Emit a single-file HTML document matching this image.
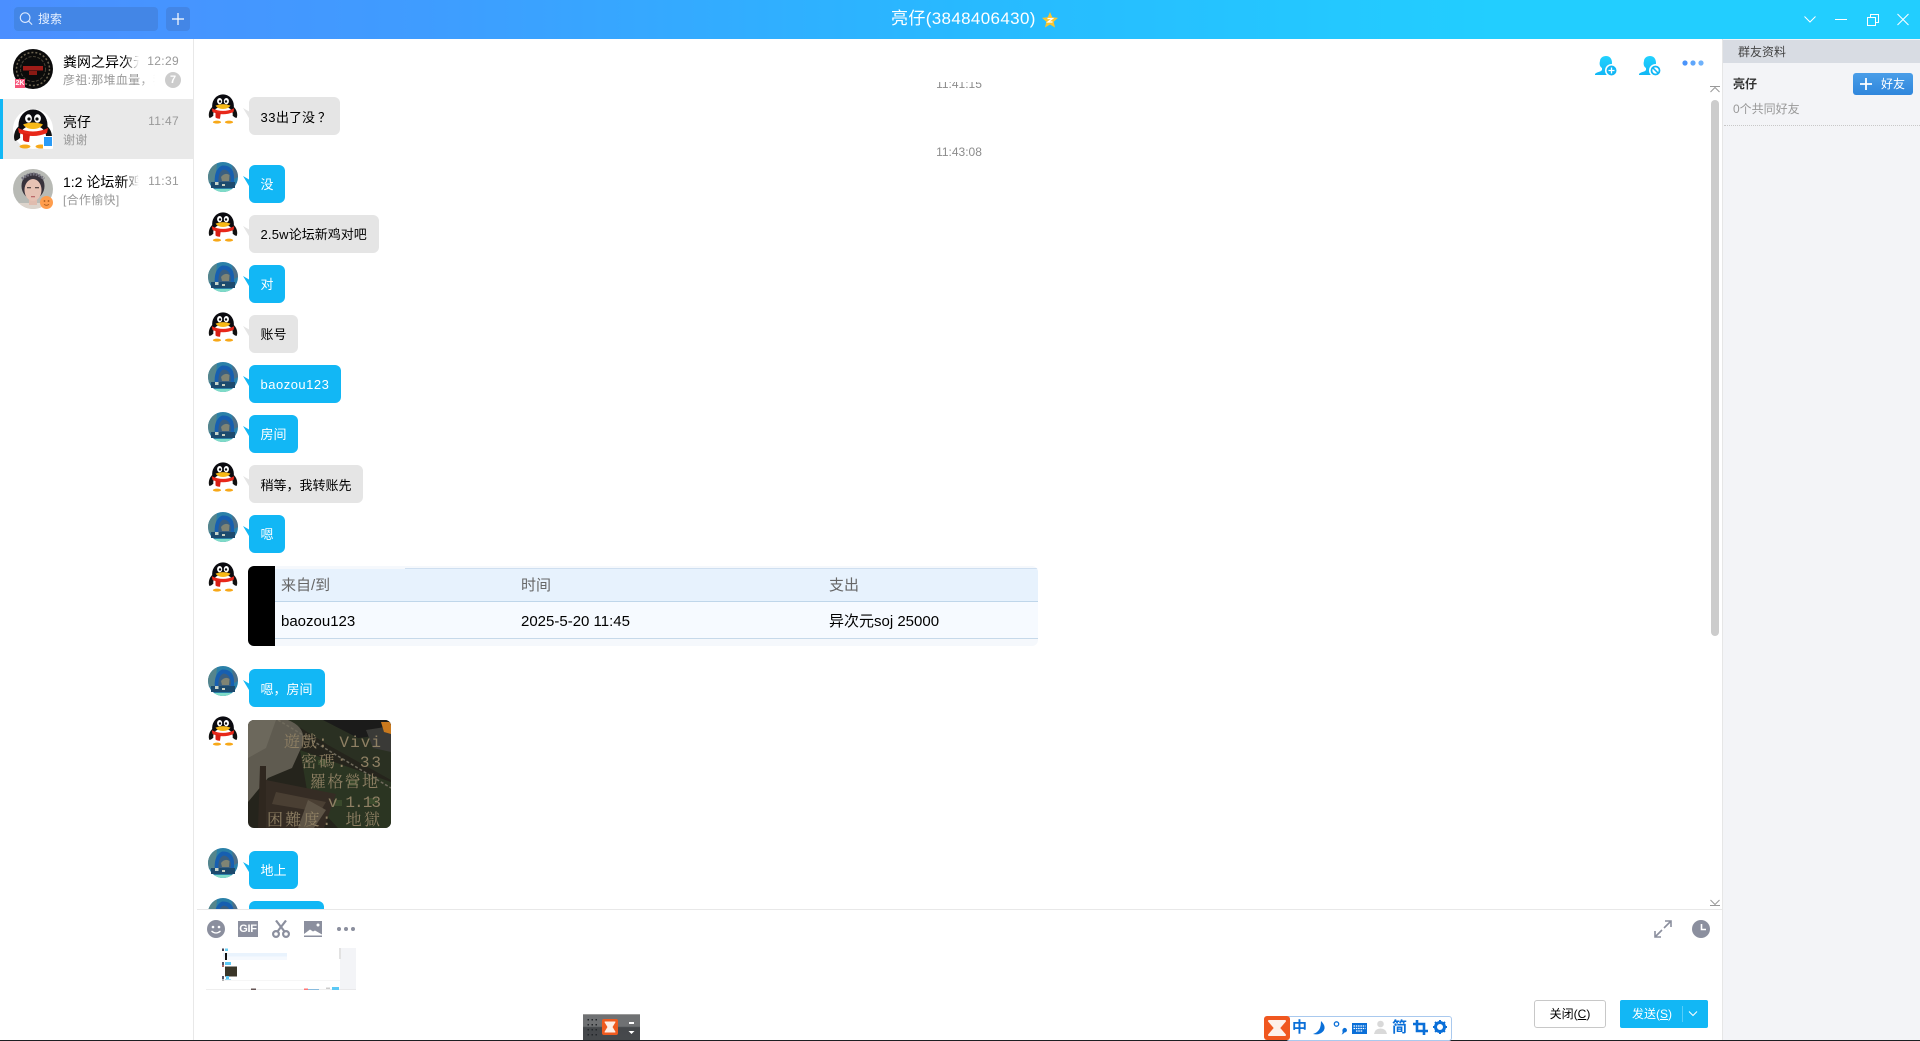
<!DOCTYPE html>
<html lang="zh">
<head>
<meta charset="utf-8">
<title>亮仔</title>
<style>
*{box-sizing:border-box;margin:0;padding:0}
html,body{width:1920px;height:1041px;overflow:hidden;background:#fff}
body{position:relative;font-family:"Liberation Sans","Noto Sans CJK SC",sans-serif;font-size:14px;color:#000}
.a{position:absolute}
.t{position:absolute;white-space:nowrap}
.pc{font-family:"Noto Sans CJK TC",sans-serif}
#bar{left:0;top:0;width:1920px;height:39px;background:linear-gradient(90deg,#4b8fff 0%,#3f9cff 22%,#28b9ff 50%,#22ceff 78%,#22ceff 100%)}
.item .name{position:absolute;left:63px;top:0;width:76px;height:20px;line-height:20px;font-size:14px;overflow:hidden;white-space:nowrap;-webkit-mask-image:linear-gradient(90deg,#000 80%,transparent);mask-image:linear-gradient(90deg,#000 80%,transparent)}
.item{position:absolute;left:0;width:193px;height:60px}
.sub{position:absolute;left:63px;top:32px;width:92px;font-size:12px;line-height:18px;color:#999;letter-spacing:.3px;overflow:hidden;white-space:nowrap;-webkit-mask-image:linear-gradient(90deg,#000 85%,transparent);mask-image:linear-gradient(90deg,#000 85%,transparent)}
.time{position:absolute;right:14px;top:13px;font-size:12px;line-height:18px;color:#999;letter-spacing:.35px}
.b{position:absolute;left:249px;height:38px;line-height:40px;padding:0 0 0 11.5px;border-radius:6px;font-size:13px;white-space:nowrap}
.g{background:#e5e5e5;color:#000}
.u{background:#12b7f5;color:#fff}
.b:before{content:"";position:absolute;left:-6px;top:11px;width:6px;height:10px;clip-path:polygon(0 0,100% 35%,100% 100%)}
.g:before{background:#e5e5e5}
.u:before{background:#12b7f5}
.p{position:absolute;left:208px;width:30px;height:30px}
.ts{position:absolute;left:900px;width:118px;text-align:center;font-size:12px;line-height:14px;color:#8c8c8c}
</style>
</head>
<body>
<svg width="0" height="0" style="position:absolute">
<defs>
<symbol id="peng" viewBox="0 0 40 40">
<ellipse cx="20" cy="16" rx="14.500" ry="15.500" fill="#0b0b10"/>
<path d="M6 17 C1 21 0 29 2 32 C6 31 9 27 10 24Z" fill="#111"/>
<path d="M34 17 C39 21 40 29 38 32 C34 31 31 27 30 24Z" fill="#111"/>
<ellipse cx="20" cy="27" rx="13" ry="10.500" fill="#fff"/>
<ellipse cx="15.500" cy="9.500" rx="3.400" ry="4.200" fill="#fff"/>
<ellipse cx="24.500" cy="9.500" rx="3.400" ry="4.200" fill="#fff"/>
<circle cx="16" cy="10" r="1.600" fill="#111"/>
<circle cx="24" cy="10" r="1.600" fill="#111"/>
<path d="M10 15.500 Q20 11.500 30 15.500 Q27 20 20 20 Q13 20 10 15.500Z" fill="#f7b918"/>
<path d="M5 19 Q20 26 35 19 L34 24 Q20 30 6 24Z" fill="#e8281a"/>
<path d="M10 24 L17 25.500 L16 33 Q11 33 10 31Z" fill="#d81f14"/>
<ellipse cx="12" cy="37.500" rx="5.500" ry="2" fill="#f7a818"/>
<ellipse cx="28" cy="37.500" rx="5.500" ry="2" fill="#f7a818"/>
</symbol>
<symbol id="blue" viewBox="0 0 30 30">
<circle cx="15" cy="15" r="15" fill="#2a80a8"/>
<path d="M0 15 A15 15 0 0 1 9 1.500 L7 20 L1 21Z" fill="#56858c"/>
<path d="M24 3 A15 15 0 0 1 30 15 L26 17Z" fill="#4d6f88"/>
<path d="M7 24 Q5 8 14 3.500 Q25 3 26 14 L26 22Z" fill="#175fb0"/>
<path d="M10.500 22 Q9.500 10 15.500 7.500 Q22 8 23 17 L22 22Z" fill="#3a5f80"/>
<path d="M13 15 Q17 10 21.500 13 L21 19 L14 19Z" fill="#808474"/>
<path d="M3 20 H27 V26 H3Z" fill="#1c4a6e"/>
<rect x="7" y="20" width="3.500" height="3" fill="#c6d2c8"/>
<rect x="14" y="22" width="3" height="2" fill="#c8cfc0"/>
<path d="M6 27 A15 15 0 0 0 24 27Z" fill="#7fdcc8"/>
</symbol>
<symbol id="prs" viewBox="0 0 22 22">
<path d="M11 1 C15 1 17 4 17 8 C17 11 15 13 14 14 L14 16 L19 18 V20 H0 V19 C1 17 6 17 7 15 L7 13 C5 12 4 9 5 6 C5 3 8 1 11 1Z" fill="url(#pg)"/>
</symbol>
<linearGradient id="pg" x1="0" y1="0" x2="0" y2="1"><stop offset="0" stop-color="#22d2ff"/><stop offset="1" stop-color="#12b7f5"/></linearGradient>
</defs>
</svg>

<!-- Title bar -->
<div class="a" id="bar"></div>
<div class="a" style="left:14px;top:7px;width:144px;height:24px;border-radius:4px;background:#4386e6"></div>
<svg class="a" style="left:19px;top:11px" width="14" height="15" viewBox="0 0 16 16" fill="none" stroke="#dbe9ff" stroke-width="1.300"><circle cx="7" cy="7" r="5.500"/><path d="M11 11L15 15"/></svg>
<div class="t" style="left:38px;top:10px;font-size:12px;line-height:18px;color:#e6f0ff">搜索</div>
<div class="a" style="left:166px;top:7px;width:24px;height:24px;border-radius:4px;background:#4386e6"></div>
<svg class="a" style="left:172px;top:13px" width="12" height="12" stroke="#fff" stroke-width="1.200"><path d="M6 0V12M0 6H12"/></svg>
<div class="t" style="left:891px;top:7px;font-size:17px;line-height:24px;color:#fff;letter-spacing:.35px">亮仔(3848406430)</div>
<svg class="a" style="left:1041px;top:11px" width="18" height="18" viewBox="0 0 18 18"><polygon points="9,1 11.300,6.300 17,6.900 12.700,10.700 14,16.500 9,13.500 4,16.500 5.300,10.700 1,6.900 6.700,6.300" fill="#fbc52d"/><path d="M6.500 7.500H11.500L7 11H11.500" stroke="#fff" stroke-width="1.300" fill="none"/></svg>
<svg class="a" style="left:1800px;top:10px" width="114" height="18" fill="none" stroke="#fff" stroke-width="1"><path d="M4.500 6.500L10 12L15.500 6.500"/><path d="M35 9.500H47"/><path d="M67.500 7.500H75.500V15.500H67.500ZM70.500 7.500V4.500H78.500V12.500H75.500"/><path d="M97.500 4L108.500 15M108.500 4L97.500 15"/></svg>

<!-- Sidebar -->
<div class="a" style="left:193px;top:39px;width:1px;height:1002px;background:#e8e8e8"></div>
<div class="item" style="top:39px">
  <svg class="a" style="left:13px;top:10px" width="40" height="40" viewBox="0 0 40 40"><circle cx="20" cy="20" r="20" fill="#0b0b0b"/><circle cx="20" cy="20" r="16.500" fill="none" stroke="#6d6450" stroke-width="1.500" stroke-dasharray="2 2"/><circle cx="20" cy="20" r="12.500" fill="none" stroke="#4a4436" stroke-width="1" stroke-dasharray="3 1.500"/><rect x="10" y="17" width="20" height="4.500" fill="#a01c18"/><rect x="16" y="22" width="8" height="4" fill="#8a1a14"/></svg>
  <div class="a" style="left:15px;top:40px;width:10px;height:9px;background:#f7557a;color:#fff;font-size:7px;line-height:9px;text-align:center;font-weight:bold">2K</div>
  <div class="name" style="top:13px">粪网之异次元</div>
  <div class="time">12:29</div>
  <div class="sub">彦祖:那堆血量<span class="pc">，</span>我</div>
  <div class="a" style="left:165px;top:33px;width:16px;height:16px;border-radius:8px;background:#ccc;color:#fff;font-size:11px;line-height:16px;text-align:center;font-weight:bold">7</div>
</div>
<div class="item" style="top:99px;background:#e9e9e9">
  <div class="a" style="left:0;top:0;width:3px;height:60px;background:#12b7f5"></div>
  <div class="a" style="left:13px;top:10px;width:40px;height:40px;border-radius:20px;background:#fff"></div>
  <svg class="a" style="left:13px;top:10px" width="40" height="40"><use href="#peng"/></svg>
  <div class="a" style="left:43px;top:37px;width:10px;height:13px;background:#fff;border-radius:1px;padding:1px"><div style="width:8px;height:9px;background:#2a9bf6"></div></div>
  <div class="name" style="top:13px">亮仔</div>
  <div class="time">11:47</div>
  <div class="sub">谢谢</div>
</div>
<div class="item" style="top:159px">
  <svg class="a" style="left:13px;top:10px" width="40" height="40" viewBox="0 0 40 40"><defs><clipPath id="c3"><circle cx="20" cy="20" r="20"/></clipPath></defs><g clip-path="url(#c3)"><rect width="40" height="40" fill="#b8bab5"/><ellipse cx="20" cy="17" rx="11.500" ry="13" fill="#38333c"/><rect x="0" y="34" width="40" height="6" fill="#dcd4cc"/><rect x="16" y="29" width="8" height="7" fill="#e0bcae"/><ellipse cx="20" cy="21" rx="8.500" ry="11" fill="#e6c2b4"/><path d="M9 10 Q20 0 31 10" fill="none" stroke="#75737f" stroke-width="3" stroke-dasharray="2 1"/><rect x="14" y="18" width="4" height="1.300" fill="#5a4a48"/><rect x="22" y="18" width="4" height="1.300" fill="#5a4a48"/><rect x="18" y="27" width="4" height="1.300" fill="#bb6a6a"/></g></svg>
  <svg class="a" style="left:40px;top:37px" width="13" height="13" viewBox="0 0 13 13"><circle cx="6.500" cy="6.500" r="6.500" fill="#ff9d4d"/><circle cx="4.500" cy="5" r=".9" fill="#a85a1c"/><circle cx="8.500" cy="5" r=".9" fill="#a85a1c"/><path d="M4 8.300Q6.500 10.300 9 8.300" stroke="#a85a1c" fill="none" stroke-width=".8"/></svg>
  <div class="name" style="top:13px">1:2 论坛新鸡</div>
  <div class="time">11:31</div>
  <div class="sub">[合作愉快]</div>
</div>

<!-- Top-right chat icons -->
<svg class="a" style="left:1595px;top:55px" width="23" height="22"><use href="#prs" width="22" height="22"/><circle cx="16.500" cy="15.500" r="6.500" fill="#fff"/><circle cx="16.500" cy="15.500" r="5" fill="#12b7f5"/><path d="M16.500 12.500V18.500M13.500 15.500H19.500" stroke="#fff" stroke-width="1.300"/></svg>
<svg class="a" style="left:1639px;top:55px" width="23" height="22"><use href="#prs" width="22" height="22"/><circle cx="16.500" cy="15.500" r="6.500" fill="#fff"/><circle cx="16.500" cy="15.500" r="4" fill="none" stroke="#12b7f5" stroke-width="1.800"/><path d="M13.800 12.800L19.200 18.200" stroke="#12b7f5" stroke-width="1.500"/></svg>
<svg class="a" style="left:1680px;top:58px" width="24" height="10"><circle cx="5" cy="5" r="2.600" fill="#4a94fb"/><circle cx="13" cy="5" r="2.600" fill="#5fa6fb"/><circle cx="21" cy="5" r="2.600" fill="#6fb2fb"/></svg>

<!-- Messages -->
<div class="a" style="left:0;top:0;width:1710px;height:1041px;clip-path:inset(82px 0 132px 194px)">
  <div class="ts" style="top:77px">11:41:15</div>
  <svg class="p" style="top:94px"><use href="#peng"/></svg>
  <div class="b g" style="top:97px;width:91px"><span style="letter-spacing:.5px">33</span>出了没<span class="pc" style="margin-left:3px">？</span></div>
  <div class="ts" style="top:145px">11:43:08</div>
  <svg class="p" style="top:162px"><use href="#blue"/></svg>
  <div class="b u" style="top:165px;width:36px">没</div>
  <svg class="p" style="top:212px"><use href="#peng"/></svg>
  <div class="b g" style="top:215px;width:130px"><span style="letter-spacing:.2px">2.5w</span>论坛新鸡对吧</div>
  <svg class="p" style="top:262px"><use href="#blue"/></svg>
  <div class="b u" style="top:265px;width:36px">对</div>
  <svg class="p" style="top:312px"><use href="#peng"/></svg>
  <div class="b g" style="top:315px;width:49px">账号</div>
  <svg class="p" style="top:362px"><use href="#blue"/></svg>
  <div class="b u" style="top:365px;width:92px;letter-spacing:.5px">baozou123</div>
  <svg class="p" style="top:412px"><use href="#blue"/></svg>
  <div class="b u" style="top:415px;width:49px">房间</div>
  <svg class="p" style="top:462px"><use href="#peng"/></svg>
  <div class="b g" style="top:465px;width:114px">稍等<span class="pc">，</span>我转账先</div>
  <svg class="p" style="top:512px"><use href="#blue"/></svg>
  <div class="b u" style="top:515px;width:36px">嗯</div>
  <svg class="p" style="top:562px"><use href="#peng"/></svg>

  <!-- Transfer table -->
  <div class="a" style="left:248px;top:566px;width:790px;height:80px;border-radius:6px;overflow:hidden;background:#f5f8fc">
    <div class="a" style="left:0;top:0;width:27px;height:80px;background:#000"></div>
    <div class="a" style="left:27px;top:3px;width:763px;height:33px;background:#e7f2fd;border-bottom:1px solid #bfd6ea"></div>
    <div class="a" style="left:157px;top:2px;width:633px;height:1px;background:#cfdff0"></div>
    <div class="a" style="left:27px;top:36px;width:763px;height:37px;background:#f6faff;border-bottom:1px solid #c6d9ea"></div>
    <div class="t" style="left:33px;top:10px;font-size:15px;line-height:20px;color:#666">来自/到</div>
    <div class="t" style="left:273px;top:10px;font-size:15px;line-height:20px;color:#666">时间</div>
    <div class="t" style="left:581px;top:10px;font-size:15px;line-height:20px;color:#666">支出</div>
    <div class="t" style="left:33px;top:46px;font-size:15px;line-height:20px;color:#000">baozou123</div>
    <div class="t" style="left:273px;top:46px;font-size:15px;line-height:20px;color:#000">2025-5-20 11:45</div>
    <div class="t" style="left:581px;top:46px;font-size:15px;line-height:20px;color:#000">异次元soj 25000</div>
  </div>

  <svg class="p" style="top:666px"><use href="#blue"/></svg>
  <div class="b u" style="top:669px;width:76px">嗯<span class="pc">，</span>房间</div>
  <svg class="p" style="top:716px"><use href="#peng"/></svg>

  <!-- Screenshot image -->
  <svg class="a" style="left:248px;top:720px;border-radius:6px" width="143" height="108" viewBox="0 0 143 108">
    <rect width="143" height="108" fill="#25241c"/>
    <path d="M40 0H143 V60 L80 25Z" fill="#2a3022"/>
    <path d="M75 0H143V14L110 18Z" fill="#1b1b1a"/>
    <path d="M118 10 L143 6 V32 L125 28Z" fill="#3a3a37"/>
    <path d="M52 30 L143 62 V108 H90 L60 76Z" fill="#2b3522"/>
    <g fill="#3a4a2c"><rect x="70" y="40" width="8" height="5"/><rect x="100" y="60" width="10" height="6"/><rect x="120" y="78" width="9" height="6"/><rect x="86" y="80" width="8" height="6"/></g>
    <path d="M0 0 H40 Q60 8 54 26 L44 48 L20 58 L0 82Z" fill="#5f5b50"/>
    <path d="M0 0H28L18 28L0 38Z" fill="#6c685c"/>
    <path d="M30 0 L143 68" stroke="#6f6a5c" stroke-width="1.500" stroke-dasharray="3 2" fill="none"/>
    <path d="M18 60 L88 74 L76 108 H10Z" fill="#352c24"/>
    <path d="M28 72 L78 82 L72 92 L24 84Z" fill="#4a3f33"/>
    <path d="M12 46 H18 V108 H10Z" fill="#2f271f"/>
    <path d="M60 80 L78 90 L66 108 H50Z" fill="#5e5446"/>
    <path d="M133 2 L143 2 V14 L136 12Z" fill="#c9791e"/>
    <g fill="#8f8064" font-family="'Liberation Mono','Noto Serif CJK SC',serif" font-size="16">
      <text x="36" y="27" textLength="97">遊戲:  Vivi</text>
      <text x="53" y="47" textLength="80">密碼:  33</text>
      <text x="62" y="67" textLength="68">羅格營地</text>
      <text x="80" y="87" textLength="53">v 1.13</text>
      <text x="19" y="105" textLength="113">困難度: 地獄</text>
    </g>
  </svg>

  <svg class="p" style="top:848px"><use href="#blue"/></svg>
  <div class="b u" style="top:851px;width:49px">地上</div>
  <svg class="p" style="top:898px"><use href="#blue"/></svg>
  <div class="b u" style="top:901px;width:75px">嗯<span class="pc">，</span>房间</div>
</div>

<!-- Scrollbar -->
<svg class="a" style="left:1709px;top:85px" width="12" height="10" fill="none" stroke="#999" stroke-width="1"><path d="M1 1.500H11M1.500 7L6 2.500L10.500 7"/></svg>
<div class="a" style="left:1711px;top:100px;width:8px;height:536px;border-radius:4px;background:#ccc"></div>
<svg class="a" style="left:1709px;top:897px" width="12" height="10" fill="none" stroke="#999" stroke-width="1"><path d="M1 8.500H11M1.500 3L6 7.500L10.500 3"/></svg>

<!-- Input area -->
<div class="a" style="left:197px;top:909px;width:1525px;height:1px;background:#e8e8e8"></div>
<svg class="a" style="left:207px;top:920px" width="18" height="18" viewBox="0 0 18 18"><circle cx="9" cy="9" r="9" fill="#8b8f9e"/><circle cx="6" cy="7" r="1.300" fill="#fff"/><circle cx="12" cy="7" r="1.300" fill="#fff"/><path d="M4.500 11Q9 15 13.500 11" stroke="#fff" stroke-width="1.300" fill="none"/></svg>
<div class="a" style="left:238px;top:921px;width:20px;height:16px;background:#8b8f9e;color:#fff;font-size:11px;line-height:16px;font-weight:bold;text-align:center;letter-spacing:-.3px">GIF</div>
<svg class="a" style="left:271px;top:920px" width="20" height="18" viewBox="0 0 20 18" fill="none" stroke="#8b8f9e" stroke-width="2.200"><circle cx="5" cy="14" r="2.900"/><circle cx="15" cy="14" r="2.900"/><path d="M6.500 11.500L15 0.500M13.500 11.500L5 0.500"/></svg>
<svg class="a" style="left:304px;top:921px" width="18" height="16" viewBox="0 0 18 16"><rect width="18" height="16" fill="#8b8f9e"/><path d="M0 13L6 8.500L9 10.500L11 9.500L18 13.500V14.500H0Z" fill="#fff"/><circle cx="14" cy="4" r="1.500" fill="#fff"/></svg>
<svg class="a" style="left:335px;top:925px" width="22" height="8" fill="#8b8f9e"><circle cx="4" cy="4" r="2"/><circle cx="11" cy="4" r="2"/><circle cx="18" cy="4" r="2"/></svg>
<svg class="a" style="left:1654px;top:920px" width="18" height="18" viewBox="0 0 18 18" fill="none" stroke="#8b8f9e" stroke-width="1.600"><path d="M11 1H17V7M17 1L10 8M1 11V17H7M1 17L8 10"/></svg>
<svg class="a" style="left:1692px;top:920px" width="18" height="18" viewBox="0 0 18 18"><circle cx="9" cy="9" r="9" fill="#8b8f9e"/><path d="M9.500 4V9.500H14" stroke="#fff" stroke-width="1.600" fill="none"/></svg>

<!-- Thumbnail -->
<svg class="a" style="left:206px;top:948px" width="150" height="42" viewBox="0 0 150 42">
  <rect width="150" height="42" fill="#fff"/>
  <rect x="134" y="0" width="16" height="42" fill="#f3f4f7"/>
  <rect x="133" y="0" width="2" height="11" fill="#e2e2e2"/>
  <rect x="16" y="0.500" width="2" height="2.500" fill="#445"/><rect x="19" y="0.500" width="3" height="2.500" fill="#6ccff5"/>
  <rect x="17" y="5" width="64" height="3.500" fill="#e9f3fd"/><rect x="17" y="8.500" width="64" height="3.500" fill="#f5f9fe"/>
  <rect x="19" y="5" width="2" height="7" fill="#111"/>
  <rect x="16" y="14" width="2" height="3" fill="#556"/><rect x="19" y="14" width="6" height="3" fill="#5cc9f5"/>
  <rect x="16" y="17" width="2" height="2" fill="#a66"/>
  <rect x="19" y="18.500" width="12" height="10" fill="#3a3628"/>
  <rect x="16" y="28" width="2" height="3" fill="#556"/>
  <rect x="20" y="28" width="3" height="3" fill="#5cc9f5"/>
  <rect x="16" y="31.500" width="2" height="1.500" fill="#777"/>
  <rect x="19" y="31" width="6" height="1" fill="#9bdcf5"/>
  <rect x="16" y="32.500" width="118" height="0.500" fill="#eee"/>
  <rect x="0" y="41.500" width="150" height="0.500" fill="#ddd"/>
  <rect x="45" y="40.500" width="5" height="1.500" fill="#655"/>
  <rect x="98" y="40.500" width="4" height="1.500" fill="#f77"/><rect x="102" y="41" width="11" height="1" fill="#8bd"/>
  <rect x="120" y="39.500" width="4" height="1.500" fill="#ccc"/>
  <rect x="126" y="39" width="7" height="3" fill="#5cc9f5"/>
</svg>

<!-- Buttons -->
<div class="a" style="left:1534px;top:1000px;width:72px;height:28px;border:1px solid #c8c8c8;border-radius:3px;background:#fff;text-align:center;font-size:12px;line-height:26px;color:#000">关闭(<u>C</u>)</div>
<div class="a" style="left:1620px;top:1000px;width:88px;height:28px;border-radius:2px;background:#12b7f5;color:#fff">
  <div class="t" style="left:12px;top:0;font-size:12px;line-height:28px">发送(<u>S</u>)</div>
  <div class="a" style="left:62px;top:6px;width:1px;height:16px;background:#55cdf9"></div>
  <svg class="a" style="left:68px;top:10px" width="10" height="8" fill="none" stroke="#fff" stroke-width="1"><path d="M1 1.500L5 5.500L9 1.500"/></svg>
</div>

<!-- Right panel -->
<div class="a" style="left:1722px;top:39px;width:198px;height:1002px;background:#f3f4f7;border-left:1px solid #e6e6e6"></div>
<div class="a" style="left:1723px;top:40px;width:197px;height:23px;background:#d8dce3"></div>
<div class="t" style="left:1738px;top:43px;font-size:12px;line-height:18px;color:#444">群友资料</div>
<div class="t" style="left:1733px;top:75px;font-size:12px;line-height:18px;color:#333;font-weight:bold">亮仔</div>
<div class="a" style="left:1853px;top:73px;width:60px;height:22px;border-radius:3px;background:linear-gradient(#4a9ee8,#2f86dc)"></div>
<svg class="a" style="left:1860px;top:78px" width="12" height="12" stroke="#fff" stroke-width="1.800"><path d="M6 0V12M0 6H12"/></svg>
<div class="t" style="left:1881px;top:75px;font-size:12px;line-height:18px;color:#fff">好友</div>
<div class="t" style="left:1733px;top:100px;font-size:12px;line-height:18px;color:#999">0个共同好友</div>
<div class="a" style="left:1724px;top:125px;width:196px;height:1px;border-top:1px dotted #c8c8c8"></div>

<!-- Bottom line -->
<div class="a" style="left:0;top:1040px;width:1920px;height:1px;background:#1d1f22"></div>

<!-- Floating recorder tool -->
<div class="a" style="left:583px;top:1014px;width:57px;height:26px;background:linear-gradient(#6f7173 0,#6f7173 45%,#45484b 50%,#46494c 100%);border-top:1px solid #9a9a9a"></div>
<svg class="a" style="left:586px;top:1018px" width="14" height="22" fill="#23262a"><rect x="1.500" y="1" width="1.500" height="1.500"/><rect x="5.500" y="1" width="1.500" height="1.500"/><rect x="9.500" y="1" width="1.500" height="1.500"/><rect x="1.500" y="6" width="1.500" height="1.500"/><rect x="5.500" y="6" width="1.500" height="1.500"/><rect x="9.500" y="6" width="1.500" height="1.500"/><rect x="1.500" y="11" width="1.500" height="1.500"/><rect x="5.500" y="11" width="1.500" height="1.500"/><rect x="9.500" y="11" width="1.500" height="1.500"/><rect x="1.500" y="16" width="1.500" height="1.500"/><rect x="5.500" y="16" width="1.500" height="1.500"/><rect x="9.500" y="16" width="1.500" height="1.500"/></svg>
<svg class="a" style="left:602px;top:1019px" width="16" height="16" viewBox="0 0 16 16"><rect width="16" height="16" rx="2" fill="#ee5a1f"/><path d="M3 3H13L10 8L13 13H3L6 8Z" fill="#fdeee6" stroke="#fdeee6" stroke-width="1" stroke-linejoin="round"/></svg>
<svg class="a" style="left:628px;top:1020px" width="10" height="16" fill="#fff"><rect x="1" y="2" width="5" height="2"/><path d="M.5 11H6.500L3.500 14Z"/></svg>

<!-- IME bar -->
<div class="a" style="left:1286px;top:1016px;width:166px;height:25px;background:#fff;border:1px solid #a9c9ee;border-radius:3px"></div>
<svg class="a" style="left:1264px;top:1016px" width="26" height="24" viewBox="0 0 26 24"><rect width="26" height="24" rx="3" fill="#f0571f"/><path d="M5 5H21L15 12L21 19H5L11 12Z" fill="#fdf0ea" stroke="#fdf0ea" stroke-width="2" stroke-linejoin="round"/></svg>
<div class="t" style="left:1292px;top:1017px;font-size:15px;line-height:22px;color:#0a6fd8;font-weight:bold">中</div>
<svg class="a" style="left:1313px;top:1021px" width="14" height="15" viewBox="0 0 14 15"><path d="M8 0Q14 6 10 10.500Q6 14.500 0 13Q5 11.500 7 7Q8 4 8 0Z" fill="#0a6fd8"/></svg>
<svg class="a" style="left:1333px;top:1021px" width="14" height="14" viewBox="0 0 14 14"><circle cx="3.500" cy="3" r="2.200" fill="none" stroke="#0a6fd8" stroke-width="1.300"/><path d="M11 7A2.300 2.300 0 1 1 11.500 11.500Q10.500 13 8.500 13.500Q10 12 9.500 10.500Q9 8 11 7Z" fill="#0a6fd8"/></svg>
<svg class="a" style="left:1352px;top:1023px" width="15" height="11" viewBox="0 0 15 11"><rect width="15" height="11" fill="#0a6fd8"/><path d="M1.500 3H13.500M1.500 5.500H13.500M4 8H11" stroke="#fff" stroke-width="1.200" stroke-dasharray="1.500 .8"/></svg>
<svg class="a" style="left:1374px;top:1020px" width="13" height="15" viewBox="0 0 13 15" fill="#d9d9d9"><circle cx="6.500" cy="4" r="3.300"/><path d="M0 14Q1 8.500 6.500 8.500Q12 8.500 13 14Z"/></svg>
<div class="t" style="left:1392px;top:1017px;font-size:15px;line-height:22px;color:#0a6fd8;font-weight:bold">简</div>
<svg class="a" style="left:1413px;top:1020px" width="15" height="15" viewBox="0 0 15 15" fill="none" stroke="#0a6fd8" stroke-width="2.600"><path d="M4 0V11H15M0 4H11V15"/></svg>
<svg class="a" style="left:1433px;top:1020px" width="14" height="14" viewBox="0 0 14 14"><circle cx="7" cy="7" r="4.500" fill="none" stroke="#0a6fd8" stroke-width="3"/><path d="M7 0V14M0 7H14M2 2L12 12M12 2L2 12" stroke="#0a6fd8" stroke-width="2" stroke-dasharray="2 10"/></svg>
</body>
</html>
